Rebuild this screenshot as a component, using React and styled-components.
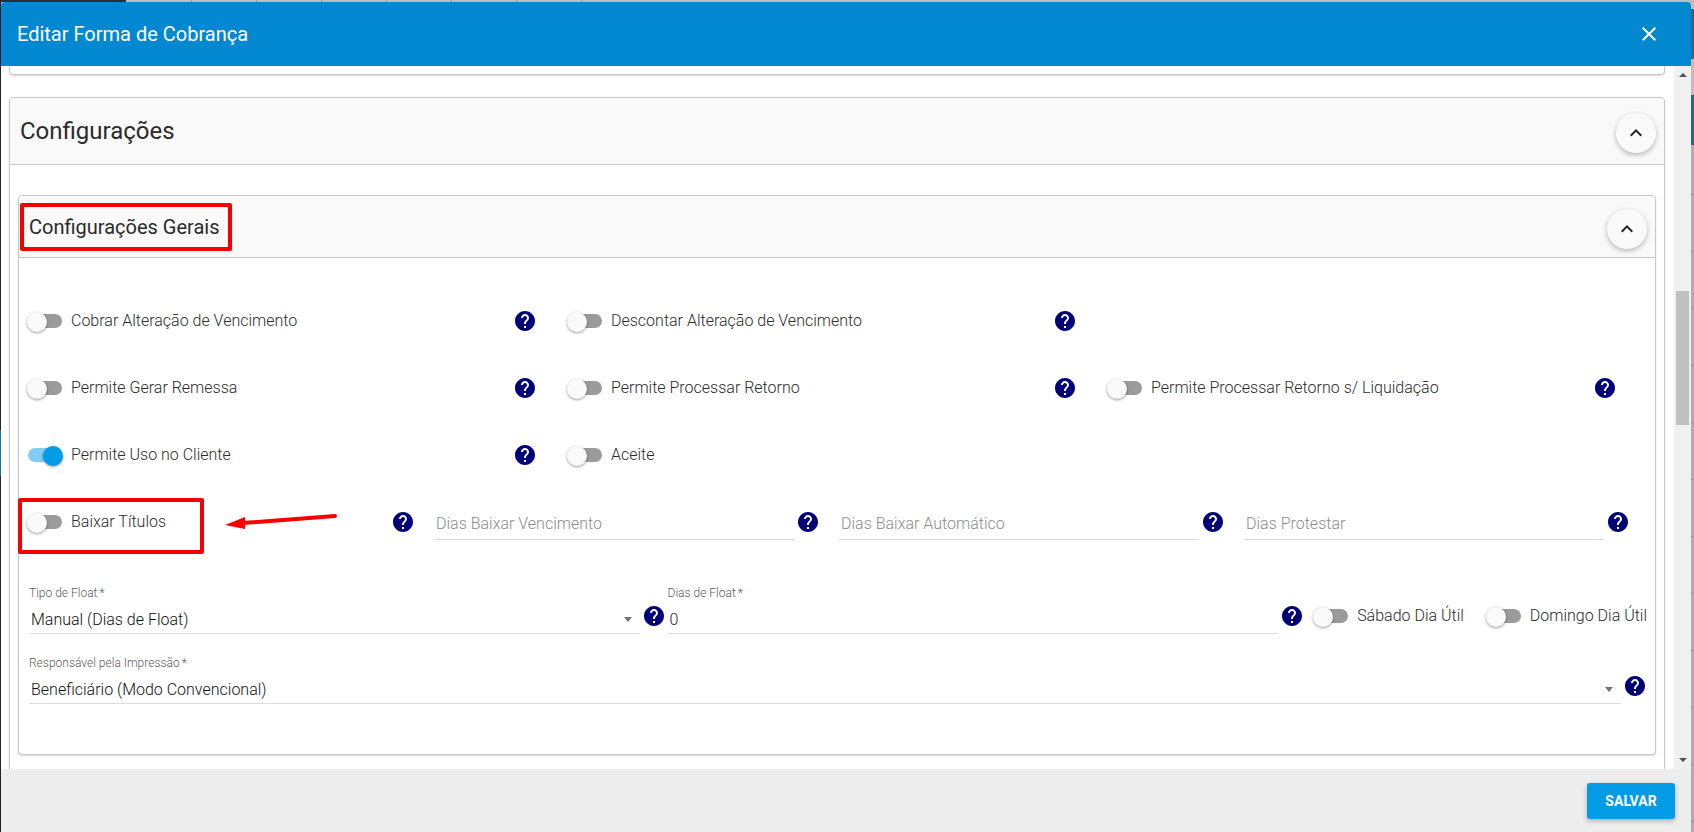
import React, { useState } from "react";
import styled, { createGlobalStyle, css } from "styled-components";
import { MdHelp, MdClose, MdKeyboardArrowUp } from "react-icons/md";

const GlobalStyle = createGlobalStyle`
  *, *::before, *::after { box-sizing: border-box; }
  body {
    margin: 0;
    font-family: Roboto, "Liberation Sans", sans-serif;
    color: #2b2b2b;
    overflow: hidden;
  }
  button, input, select { font: inherit; color: inherit; }
`;

/* The dimmed application, visible as thin strips around the dialog. */
const Backdrop = styled.div`
  display: flex;
  height: 100vh;
  padding: 2px 3px 0 1px;
  background:
    linear-gradient(#2b2b35, #2b2b35) 0 0 / 126px 2px no-repeat,
    linear-gradient(#23232d 0 430px, #1b6f9c 430px 476px, #23232d 476px) 0 0 / 1px 100% no-repeat,
    linear-gradient(#bdbdbd 0 9px, #1a6d99 9px 59px, #bdbdbd 59px 95px, #1a6d99 95px 145px, transparent 145px) 100% 0 / 3px 100% no-repeat,
    repeating-linear-gradient(transparent 0 56px, #969696 56px 57px) 100% 24px / 3px 100% no-repeat,
    repeating-linear-gradient(90deg, #bdbdbd 0 64px, #9a9a9a 64px 65px) 127px 0 / 455px 2px no-repeat,
    linear-gradient(#bdbdbd, #bdbdbd) 0 0 / 100% 2px no-repeat,
    #adadad;
`;

const Dialog = styled.section`
  flex: 1;
  min-width: 0;
  display: flex;
  flex-direction: column;
  background: #fff;
  border-radius: 4px 4px 0 0;
  overflow: hidden;
`;

const DialogHeader = styled.header`
  flex: none;
  display: flex;
  align-items: center;
  justify-content: space-between;
  height: 64px;
  padding: 0 30px 0 16px;
  background: #0288d1;
  color: #fff;
`;

const DialogTitle = styled.h1`
  margin: 0;
  font-size: 20px;
  line-height: 24px;
  font-weight: 400;
`;

const CloseButton = styled.button`
  display: flex;
  padding: 0;
  border: 0;
  background: none;
  font-size: 24px;
  cursor: pointer;
`;

const Body = styled.div`
  flex: 1;
  min-height: 0;
  display: flex;
`;

const Content = styled.div`
  flex: 1;
  min-width: 0;
  padding: 0 9px 0 8px;
  overflow: hidden;
`;

const Scrollbar = styled.div`
  flex: none;
  width: 17px;
  display: flex;
  flex-direction: column;
  align-items: center;
  justify-content: space-between;
  padding: 7px 0;
  background: #f0f0f0;
`;

const ScrollTrack = styled.div`
  flex: 1;
  width: 13px;
  padding-top: 214px;
`;

const ScrollThumb = styled.div`
  height: 134px;
  background: #c0c0c0;
`;

const panelFrame = css`
  border: 1px solid #c8c8c8;
  border-radius: 4px;
  box-shadow: 0 1px 2px rgba(0, 0, 0, 0.16);
`;

const PanelTail = styled.div`
  ${panelFrame}
  height: 9px;
  border-top: 0;
  border-radius: 0 0 4px 4px;
`;

const Panel = styled.section`
  ${panelFrame}
  margin-top: ${(p) => p.$gap}px;
  background: #fff;
`;

const PanelHeader = styled.header`
  display: flex;
  align-items: center;
  justify-content: space-between;
  height: ${(p) => (p.$nested ? 62 : 67)}px;
  padding: 0 8px 0 10px;
  border-bottom: 1px solid #c8c8c8;
  border-radius: 4px 4px 0 0;
  background: #f9f9f9;
`;

const PanelTitle = styled.h2`
  position: relative;
  margin: 0;
  font-size: ${(p) => (p.$nested ? 20 : 24)}px;
  line-height: 32px;
  font-weight: 400;
`;

const CollapseButton = styled.button`
  display: grid;
  place-items: center;
  width: 40px;
  height: 40px;
  margin-top: 4px;
  padding: 0;
  border: 0;
  border-radius: 50%;
  background: #fafafa;
  box-shadow: 0 2px 5px rgba(0, 0, 0, 0.28);
  color: #212121;
  font-size: 24px;
  cursor: pointer;
`;

const OuterBody = styled.div`
  padding: 0 8px 30px;
  overflow: hidden;
`;

const SettingsForm = styled.form`
  padding: 29px 8px 36px;
`;

const OptionRow = styled.div`
  display: grid;
  grid-template-columns: repeat(${(p) => p.$columns}, 1fr);
  height: 67px;
`;

const OptionCell = styled.div`
  position: relative;
  display: flex;
  align-items: center;
  gap: 2px;
  min-width: 0;
  padding-right: ${(p) => p.$inset}px;
`;

const FieldsArea = styled.div`
  padding-top: 23px;
`;

const FieldsRow = styled.div`
  display: flex;
  height: 70px;
`;

const FieldCell = styled.div`
  flex: 1;
  min-width: 0;
  display: flex;
  align-items: flex-start;
  gap: 2px;
`;

const Field = styled.div`
  flex: 1;
  min-width: 0;
  margin-left: 2px;
  padding-top: ${(p) => (p.$labelled ? 7 : 4)}px;
`;

const FieldLabel = styled.label`
  display: flex;
  gap: 2px;
  height: 20px;
  font-size: 12px;
  line-height: 16px;
  font-weight: 300;
  color: #5c5c5c;
`;

const controlStyle = css`
  display: block;
  width: 100%;
  padding: 0 2px;
  border: 0;
  border-bottom: 1px solid #dcdcdc;
  border-radius: 0;
  outline: 0;
  background: none;
  font-size: 16px;
  font-weight: 300;
`;

const TextInput = styled.input`
  ${controlStyle}
  height: ${(p) => (p.$tall ? 33 : 29)}px;
  &::placeholder { color: #8c8c8c; opacity: 1; }
`;

const SelectWrap = styled.div`
  position: relative;
`;

const Select = styled.select`
  ${controlStyle}
  height: 29px;
  appearance: none;
  color: #111;
`;

const Caret = styled.svg`
  position: absolute;
  right: 8px;
  top: 12px;
  width: 8px;
  height: 5px;
  fill: #757575;
  pointer-events: none;
`;

const HelpButton = styled.button`
  flex: none;
  display: flex;
  margin-top: ${(p) => (p.$labelled ? 26 : 0)}px;
  padding: 0;
  border: 0;
  background: none;
  color: #000078;
  font-size: 24px;
  cursor: help;
`;

const ToggleLabel = styled.label`
  flex: ${(p) => (p.$fill ? "1" : "none")};
  display: flex;
  align-items: center;
  gap: 9px;
  padding-left: 1px;
  font-size: 16px;
  line-height: 24px;
  font-weight: 300;
  white-space: nowrap;
`;

const Switch = styled.input`
  flex: none;
  appearance: none;
  width: 34px;
  height: 14px;
  margin: 0;
  border-radius: 7px;
  background: #9b9b9b;
  cursor: pointer;

  &::before {
    content: "";
    display: block;
    width: 20px;
    height: 20px;
    margin: -2px 0 0 -1px;
    border-radius: 50%;
    background: #fafafa;
    box-shadow: 0 1px 3px rgba(0, 0, 0, 0.4);
  }
  &:checked { background: #81cdf4; }
  &:checked::before {
    margin-left: 15px;
    background: #039be5;
  }
`;

const ToggleGroup = styled.div`
  display: flex;
  align-items: center;
  gap: 22px;
  height: 76px;
  margin-left: 9px;
`;

const Highlight = styled.span`
  position: absolute;
  inset: ${(p) => p.$inset};
  width: ${(p) => p.$width}px;
  border: 4px solid #f80000;
  border-radius: 2px;
  pointer-events: none;
`;

const Arrow = styled.svg`
  position: absolute;
  left: 198px;
  top: 23px;
  width: 114px;
  height: 20px;
  pointer-events: none;
`;

const Footer = styled.footer`
  flex: none;
  display: flex;
  align-items: center;
  justify-content: flex-end;
  height: 63px;
  padding: 0 16px;
  background: #ededed;
`;

const SaveButton = styled.button`
  width: 88px;
  height: 36px;
  padding: 0;
  border: 0;
  border-radius: 3px;
  background: #039be5;
  box-shadow: 0 2px 5px rgba(0, 0, 0, 0.26);
  color: #fff;
  font-size: 14px;
  font-weight: 700;
  cursor: pointer;
`;

function Help({ about, labelled }) {
  return (
    <HelpButton type="button" aria-label={`Ajuda: ${about}`} $labelled={labelled}>
      <MdHelp />
    </HelpButton>
  );
}

function Toggle({ label, on = false, fill }) {
  const [checked, setChecked] = useState(on);
  return (
    <ToggleLabel $fill={fill}>
      <Switch type="checkbox" role="switch" checked={checked} onChange={() => setChecked(!checked)} />
      {label}
    </ToggleLabel>
  );
}

function ToggleCell({ label, on, help = true, inset = 30, children }) {
  return (
    <OptionCell $inset={inset}>
      <Toggle label={label} on={on} fill />
      {help && <Help about={label} />}
      {children}
    </OptionCell>
  );
}

function DaysCell({ label }) {
  return (
    <OptionCell $inset={17}>
      <Field>
        <TextInput $tall type="text" placeholder={label} aria-label={label} />
      </Field>
      <Help about={label} />
    </OptionCell>
  );
}

function LabelledField({ id, label, children }) {
  return (
    <FieldCell>
      <Field $labelled>
        <FieldLabel htmlFor={id}>
          {label}
          <span>*</span>
        </FieldLabel>
        {children}
      </Field>
      <Help about={label} labelled />
    </FieldCell>
  );
}

function SelectField({ id, label, value }) {
  return (
    <LabelledField id={id} label={label}>
      <SelectWrap>
        <Select id={id} defaultValue={value}>
          <option>{value}</option>
        </Select>
        <Caret viewBox="0 0 8 5" aria-hidden="true">
          <path d="M0 0h8L4 5z" />
        </Caret>
      </SelectWrap>
    </LabelledField>
  );
}

function PanelTop({ title, nested, children }) {
  return (
    <PanelHeader $nested={nested}>
      <PanelTitle $nested={nested}>
        {title}
        {children}
      </PanelTitle>
      <CollapseButton type="button" aria-label={`Recolher ${title}`}>
        <MdKeyboardArrowUp />
      </CollapseButton>
    </PanelHeader>
  );
}

function GeneralSettings() {
  return (
    <Panel $gap={30}>
      <PanelTop title="Configurações Gerais" nested>
        <Highlight $inset="-8px auto -8px -9px" $width={212} />
      </PanelTop>
      <SettingsForm>
        <OptionRow $columns={3}>
          <ToggleCell label="Cobrar Alteração de Vencimento" />
          <ToggleCell label="Descontar Alteração de Vencimento" />
        </OptionRow>
        <OptionRow $columns={3}>
          <ToggleCell label="Permite Gerar Remessa" />
          <ToggleCell label="Permite Processar Retorno" />
          <ToggleCell label="Permite Processar Retorno s/ Liquidação" />
        </OptionRow>
        <OptionRow $columns={3}>
          <ToggleCell label="Permite Uso no Cliente" on />
          <ToggleCell label="Aceite" help={false} />
        </OptionRow>
        <OptionRow $columns={4}>
          <ToggleCell label="Baixar Títulos" inset={17}>
            <Highlight $inset="10px auto 1px -9px" $width={186} />
            <Arrow viewBox="0 0 114 20" aria-hidden="true">
              <path d="M18 12 110 5" stroke="#f80000" strokeWidth="4" strokeLinecap="round" />
              <path d="M0 14 20 6 20 18z" fill="#f80000" />
            </Arrow>
          </ToggleCell>
          <DaysCell label="Dias Baixar Vencimento" />
          <DaysCell label="Dias Baixar Automático" />
          <DaysCell label="Dias Protestar" />
        </OptionRow>
        <FieldsArea>
          <FieldsRow>
            <SelectField id="tipo-float" label="Tipo de Float" value="Manual (Dias de Float)" />
            <LabelledField id="dias-float" label="Dias de Float">
              <TextInput id="dias-float" type="text" defaultValue="0" />
            </LabelledField>
            <ToggleGroup>
              <Toggle label="Sábado Dia Útil" />
              <Toggle label="Domingo Dia Útil" />
            </ToggleGroup>
          </FieldsRow>
          <FieldsRow>
            <SelectField
              id="responsavel"
              label="Responsável pela Impressão"
              value="Beneficiário (Modo Convencional)"
            />
          </FieldsRow>
        </FieldsArea>
      </SettingsForm>
    </Panel>
  );
}

export default function App() {
  return (
    <>
      <GlobalStyle />
      <Backdrop>
        <Dialog role="dialog" aria-labelledby="dialog-title">
          <DialogHeader>
            <DialogTitle id="dialog-title">Editar Forma de Cobrança</DialogTitle>
            <CloseButton type="button" aria-label="Fechar">
              <MdClose />
            </CloseButton>
          </DialogHeader>
          <Body>
            <Content>
              <PanelTail />
              <Panel $gap={22}>
                <PanelTop title="Configurações" />
                <OuterBody>
                  <GeneralSettings />
                </OuterBody>
              </Panel>
            </Content>
            <Scrollbar aria-hidden="true">
              <svg width="8" height="4" viewBox="0 0 8 4"><path d="M4 0 8 4H0z" fill="#505050" /></svg>
              <ScrollTrack>
                <ScrollThumb />
              </ScrollTrack>
              <svg width="8" height="4" viewBox="0 0 8 4"><path d="M0 0h8L4 4z" fill="#505050" /></svg>
            </Scrollbar>
          </Body>
          <Footer>
            <SaveButton type="button">SALVAR</SaveButton>
          </Footer>
        </Dialog>
      </Backdrop>
    </>
  );
}
